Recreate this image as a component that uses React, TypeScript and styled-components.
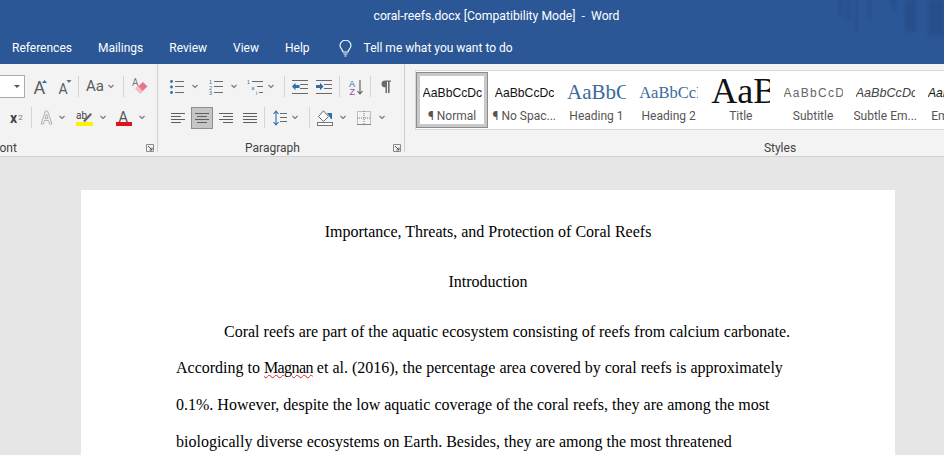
import React from 'react';
import styled, { createGlobalStyle } from 'styled-components';

const uiFont = `Roboto, 'Open Sans', Arial, sans-serif`;
const grey = '#6a6a6a';
const blue = '#2f6ea8';

const GlobalStyle = createGlobalStyle`
  html, body {
    margin: 0;
    padding: 0;
    overflow: hidden;
    background: #e6e6e6;
  }
  * {
    box-sizing: border-box;
  }
`;

const Window = styled.div`
  width: 944px;
  height: 455px;
  display: flex;
  flex-direction: column;
  overflow: hidden;
  font-family: ${uiFont};
`;

const Header = styled.header`
  position: relative;
  flex: 0 0 64px;
  background: #2b5797;
  color: #fff;
  overflow: hidden;
`;

const Decor = styled.svg`
  position: absolute;
  right: 0;
  top: 0;
  filter: blur(1.5px);
`;

const TitleBar = styled.div`
  height: 32px;
  display: flex;
  align-items: center;
  justify-content: center;
  padding-left: 49px;
  font-size: 12.2px;
  white-space: pre;
`;

const Tabs = styled.nav`
  height: 32px;
  display: flex;
  align-items: center;
  padding-left: 12px;
  gap: 26px;
  font-size: 12px;
`;

const Tell = styled.div`
  display: flex;
  align-items: center;
  gap: 12px;
  margin-left: 3px;
`;

const Ribbon = styled.section`
  flex: 0 0 93px;
  display: flex;
  background: #f3f3f3;
  border-bottom: 1px solid #d2d2d2;
  padding-bottom: 1px;
`;

const Group = styled.div<{ $w: number }>`
  flex: 0 0 ${p => p.$w}px;
  width: ${p => p.$w}px;
  display: flex;
  flex-direction: column;
  padding-top: 7px;
  border-right: 1px solid #d0d0d0;
  margin-bottom: 3px;
`;

const Row = styled.div<{ $pl?: number }>`
  height: 31px;
  display: flex;
  align-items: center;
  padding-left: ${p => p.$pl || 0}px;
`;

const Footer = styled.div`
  margin-top: auto;
  margin-bottom: -4px;
  height: 16px;
  display: flex;
  align-items: center;
  font-size: 12px;
  color: #444;
`;

const GroupLabel = styled.span<{ $pr?: number; $ml?: number; $left?: boolean }>`
  flex: 1;
  text-align: ${p => (p.$left ? 'left' : 'center')};
  padding-right: ${p => p.$pr || 0}px;
  margin-left: ${p => p.$ml || 0}px;
`;

const Launcher = styled.svg`
  flex: 0 0 8px;
  margin-right: 3px;
`;

const Combo = styled.div`
  width: 25px;
  height: 23px;
  margin-right: 8px;
  background: #fff;
  border: 1px solid #ababab;
  border-left: none;
  display: flex;
  align-items: center;
  justify-content: flex-end;
  padding-right: 4px;
`;

const Caret = styled.i`
  width: 0;
  height: 0;
  border-left: 3px solid transparent;
  border-right: 3px solid transparent;
  border-top: 3px solid #555;
`;

const Tool = styled.div<{ $w: number; $gap?: number }>`
  flex: 0 0 ${p => p.$w}px;
  width: ${p => p.$w}px;
  display: flex;
  align-items: center;
  gap: ${p => p.$gap || 0}px;
`;

const AlignTool = styled.div<{ $on?: boolean }>`
  flex: 0 0 22px;
  height: 22px;
  margin: 0 1px;
  display: flex;
  align-items: center;
  justify-content: center;
  background: ${p => (p.$on ? '#c5c5c5' : 'transparent')};
  border: 1px solid ${p => (p.$on ? '#8e8e8e' : 'transparent')};
`;

const Sep = styled.div<{ $ml?: number; $mr?: number }>`
  flex: 0 0 1px;
  height: 21px;
  background: #d4d4d4;
  margin-left: ${p => p.$ml || 0}px;
  margin-right: ${p => p.$mr || 0}px;
`;

const Glyph = styled.span<{ $size: number; $color?: string; $weight?: number }>`
  font-family: ${uiFont};
  font-size: ${p => p.$size}px;
  line-height: 1;
  color: ${p => p.$color || '#5a5a5a'};
  font-weight: ${p => p.$weight || 400};
`;

const Sup = styled.sup`
  font-size: 8px;
  line-height: 1;
  color: #777;
  margin-left: 1px;
`;

const StylesGroup = styled.div`
  flex: 0 0 740px;
  display: flex;
  flex-direction: column;
  padding: 6px 0 3px 10px;
`;

const Gallery = styled.div`
  height: 60px;
  display: flex;
  background: #fff;
  border-top: 1px solid #d6d6d6;
  border-bottom: 1px solid #d6d6d6;
  border-left: 1px solid #d6d6d6;
`;

const StyleItem = styled.div<{ $on?: boolean }>`
  flex: 0 0 72.2px;
  height: 56px;
  margin-top: 1px;
  display: flex;
  flex-direction: column;
  align-items: center;
  overflow: hidden;
  border: ${p => (p.$on ? '1px solid #8c8c8c' : '1px solid transparent')};
  box-shadow: ${p => (p.$on ? 'inset 0 0 0 3px #c8c8c8' : 'none')};
`;

const Preview = styled.div<{
  $font?: string;
  $size?: number;
  $color?: string;
  $italic?: boolean;
  $spacing?: number;
  $big?: boolean;
}>`
  width: 59px;
  height: ${p => (p.$big ? 31 : 36)}px;
  flex: 0 0 ${p => (p.$big ? 31 : 36)}px;
  margin-top: ${p => (p.$big ? 5 : 0)}px;
  display: flex;
  align-items: ${p => (p.$big ? 'flex-end' : 'center')};
  overflow: hidden;
  white-space: nowrap;
  padding-top: ${p => (p.$big ? 0 : 3)}px;
  line-height: ${p => (p.$big ? '36px' : 'normal')};
  font-family: ${p => p.$font || `'Liberation Sans', Arial, sans-serif`};
  font-size: ${p => p.$size || 12.2}px;
  color: ${p => p.$color || '#111'};
  font-style: ${p => (p.$italic ? 'italic' : 'normal')};
  letter-spacing: ${p => p.$spacing || 0}px;
`;

const ItemLabel = styled.div`
  font-size: 12px;
  line-height: 14px;
  color: #555;
  white-space: nowrap;
`;

const Canvas = styled.main`
  flex: 1;
  min-height: 0;
  padding: 33px 49px 0 81px;
  background: #e6e6e6;
`;

const Page = styled.article`
  height: 400px;
  background: #fff;
  padding: 23.5px 95px 0;
  font-family: 'Liberation Serif', 'Times New Roman', serif;
  font-size: 16px;
  line-height: 36.6px;
  color: #000;
`;

const Center = styled.p`
  margin: 0 0 13.6px;
  text-align: center;
`;

const Body = styled.p`
  margin: 0;
  text-indent: 48px;
`;

const Misspelt = styled.span`
  letter-spacing: -0.6px;
  text-decoration: underline wavy #d22;
  text-decoration-thickness: 1px;
`;

const Chevron = () => (
  <svg width="8" height="5" viewBox="0 0 8 5">
    <path d="M1.5 1 L4 3.5 L6.5 1" fill="none" stroke="#777" strokeWidth="1.1" />
  </svg>
);

const Lines = ({ xs, color = grey }: { xs: [number, number, number][]; color?: string }) => (
  <>
    {xs.map(([x1, x2, y], i) => (
      <line key={i} x1={x1} x2={x2} y1={y + 0.5} y2={y + 0.5} stroke={color} strokeWidth="1" />
    ))}
  </>
);

const Bullets = () => (
  <svg width="14" height="14" viewBox="0 0 14 14">
    <circle cx="1.5" cy="1.5" r="1.4" fill={blue} />
    <circle cx="1.5" cy="7" r="1.4" fill={blue} />
    <circle cx="1.5" cy="12.5" r="1.4" fill={blue} />
    <Lines xs={[[5, 14, 1], [5, 14, 6], [5, 14, 12]]} />
  </svg>
);

const Numbering = () => (
  <svg width="14" height="16" viewBox="0 0 14 16">
    <g fill={blue} fontSize="5.5" fontFamily="Liberation Sans">
      <text x="0" y="5">1</text>
      <text x="0" y="10.5">2</text>
      <text x="0" y="16">3</text>
    </g>
    <Lines xs={[[5, 14, 2], [5, 14, 7], [5, 14, 13]]} />
  </svg>
);

const Multilevel = () => (
  <svg width="16" height="16" viewBox="0 0 16 16">
    <g fontSize="5" fontFamily="Liberation Sans">
      <text x="0" y="5" fill={blue}>1</text>
      <text x="4.5" y="10.5" fill={blue}>a</text>
      <text x="9" y="16" fill="#555">i</text>
    </g>
    <Lines xs={[[5, 16, 2], [10, 16, 7], [12, 16, 13]]} />
  </svg>
);

const Indent = ({ flip }: { flip?: boolean }) => (
  <svg width="16" height="14" viewBox="0 0 16 14">
    <Lines xs={[[0, 16, 0], [8, 16, 4], [8, 16, 8], [0, 16, 13]]} />
    {flip ? (
      <path d="M0 5 H4 V2.8 L7.5 6.5 L4 10.2 V8 H0 Z" fill={blue} />
    ) : (
      <path d="M7.5 5 H3.5 V2.8 L0 6.5 L3.5 10.2 V8 H7.5 Z" fill={blue} />
    )}
  </svg>
);

const Sort = () => (
  <svg width="14" height="16" viewBox="0 0 14 16">
    <text x="0" y="7.5" fontSize="9" fontFamily="Liberation Sans" fill={blue}>A</text>
    <text x="0.5" y="16" fontSize="9" fontFamily="Liberation Sans" fill="#8a4fa8">Z</text>
    <path d="M11 1 V14.5 M8.5 12 L11 15 L13.5 12" fill="none" stroke="#555" strokeWidth="1.1" />
  </svg>
);

const AlignIcon = ({ kind }: { kind: 'left' | 'center' | 'right' | 'justify' }) => {
  const rows: Record<string, [number, number, number][]> = {
    left: [[0, 14, 1], [0, 10, 4], [0, 14, 7], [0, 10, 10]],
    center: [[0, 14, 1], [2, 12, 4], [0, 14, 7], [2, 12, 10]],
    right: [[0, 14, 1], [4, 14, 4], [0, 14, 7], [4, 14, 10]],
    justify: [[0, 14, 1], [0, 14, 4], [0, 14, 7], [0, 14, 10]],
  };
  return (
    <svg width="14" height="12" viewBox="0 0 14 12">
      <Lines xs={rows[kind]} color="#5f5f5f" />
    </svg>
  );
};

const LineSpacing = () => (
  <svg width="14" height="16" viewBox="0 0 14 16">
    <path d="M3 1 V15 M0.5 4 L3 1 L5.5 4 M0.5 12 L3 15 L5.5 12" fill="none" stroke={blue} strokeWidth="1.1" />
    <Lines xs={[[7, 14, 3], [7, 14, 7], [7, 14, 11]]} />
  </svg>
);

const Shading = () => (
  <svg width="16" height="16" viewBox="0 0 16 16">
    <path d="M1.5 6.5 L6.5 0.8 L11.5 6.5 L6.5 11.5 Z" fill="#fff" stroke="#666" strokeWidth="1" />
    <path d="M10 3 H15 V8.5 Q13.5 10 12.8 7 Z" fill={blue} />
    <rect x="0.5" y="12.5" width="15" height="3" fill="#fff" stroke="#777" />
  </svg>
);

const BordersIcon = () => (
  <svg width="14" height="14" viewBox="0 0 14 14">
    <rect x="0.5" y="0.5" width="13" height="13" fill="none" stroke="#888" strokeDasharray="1 1" />
    <path d="M7 0 V14 M0 7 H14" stroke="#777" strokeDasharray="1 1" />
    <path d="M0 13.5 H14" stroke="#888" />
  </svg>
);

const Pilcrow = () => (
  <svg width="10" height="13" viewBox="0 0 10 15" preserveAspectRatio="none">
    <path d="M4.5 8.5 A4 4 0 0 1 4.5 0.5 H10 V2 H8.6 V15 H7 V2 H6 V15 H4.5 Z" fill="#6b6b6b" />
  </svg>
);

const Eraser = () => (
  <svg width="16" height="17" viewBox="0 0 16 17">
    <text x="0" y="8" fontSize="10" fontFamily="Roboto" fill="#777">A</text>
    <path d="M3.5 10.5 L11 4 L15.5 8.5 L8 15.5 Z" fill="#e7788a" />
    <path d="M3.5 10.5 L6.2 8 L10.5 13 L8 15.5 Z" fill="#f3bcc4" />
  </svg>
);

const SizeFont = ({ size, up }: { size: number; up?: boolean }) => (
  <svg width="15" height="16" viewBox="0 0 15 16">
    <text x="0.5" y="15" fontSize={size} fontFamily="Roboto" fill="#5c5c5c">A</text>
    <path d={up ? 'M9 4 L11.5 1 L14 4 Z' : 'M8.5 1 L11 4 L13.5 1 Z'} fill={up ? blue : '#5f6f80'} />
  </svg>
);

const Highlight = () => (
  <svg width="17" height="16" viewBox="0 0 17 16">
    <text x="0" y="8.5" fontSize="10" fontFamily="Roboto" fill="#444">ab</text>
    <path d="M7 11 L14.5 3 L16 4.5 L9 12 Z" fill="#666" />
    <rect x="0" y="12" width="17" height="4" fill="#fbf200" />
  </svg>
);

const FontColor = () => (
  <svg width="16" height="16" viewBox="0 0 16 16">
    <text x="2.5" y="12" fontSize="14.5" fontFamily="Roboto" fill="#555">A</text>
    <rect x="0" y="12" width="16" height="4" fill="#e0101c" />
  </svg>
);

const TextEffect = () => (
  <svg width="13" height="15" viewBox="0 0 13 15">
    <path d="M1 14 L5.4 1 H7.6 L12 14 H9.6 L8.6 10.5 H4.4 L3.4 14 Z M5 8.5 H8 L6.5 4 Z" fill="#eee" stroke="#b5b5b5" />
  </svg>
);

const Bulb = () => (
  <svg width="13" height="17" viewBox="0 0 13 17">
    <path
      d="M4 12 C4 9.5 1 8.5 1 5.5 A5.5 5.2 0 0 1 12 5.5 C12 8.5 9 9.5 9 12 Z M4.5 14 H8.5 M5.5 16 H7.5"
      fill="none"
      stroke="#fff"
      strokeWidth="1.1"
    />
  </svg>
);

const LauncherIcon = () => (
  <Launcher width="8" height="8" viewBox="0 0 8 8">
    <path d="M0.5 7.5 V0.5 H7.5 V7.5 Z" fill="none" stroke="#8a8a8a" />
    <path d="M2 2 L6 6 M6 3.5 V6 H3.5" fill="none" stroke="#555" />
  </Launcher>
);

const styleItems = [
  { label: '¶ Normal', on: true },
  { label: '¶ No Spac...' },
  { label: 'Heading 1', text: 'AaBbC', font: `'Liberation Serif', serif`, size: 21, color: '#3a6a9c' },
  { label: 'Heading 2', text: 'AaBbCcI', font: `'Liberation Serif', serif`, size: 16.5, color: '#3a6a9c' },
  { label: 'Title', text: 'AaB', font: `'Liberation Serif', serif`, size: 36, big: true },
  { label: 'Subtitle', text: 'AaBbCcD', color: '#666', spacing: 1.3, size: 12 },
  { label: 'Subtle Em...', italic: true, color: '#444', size: 12.6 },
  { label: 'Emphasis', italic: true },
];

export default function App() {
  return (
    <Window>
      <GlobalStyle />
      <Header>
        <Decor width="124" height="40" viewBox="0 0 124 40">
          <g fill="#244a84" opacity="0.55">
            <rect x="18" y="0" width="5" height="16" />
            <rect x="26" y="0" width="4" height="20" />
            <rect x="35" y="0" width="3" height="32" />
            <rect x="48" y="0" width="3" height="18" />
            <path d="M69 0 L76 0 L76 12 Z" />
            <rect x="85" y="0" width="11" height="32" />
            <rect x="108" y="0" width="16" height="36" />
          </g>
        </Decor>
        <TitleBar>coral-reefs.docx [Compatibility Mode]  -  Word</TitleBar>
        <Tabs>
          <span>References</span>
          <span>Mailings</span>
          <span>Review</span>
          <span>View</span>
          <span>Help</span>
          <Tell>
            <Bulb />
            <span>Tell me what you want to do</span>
          </Tell>
        </Tabs>
      </Header>

      <Ribbon>
        <Group $w={158}>
          <Row>
            <Combo>
              <Caret />
            </Combo>
            <Tool $w={25}>
              <SizeFont size={18} up />
            </Tool>
            <Tool $w={20}>
              <SizeFont size={14} />
            </Tool>
            <Sep $mr={7} />
            <Tool $w={37} $gap={3}>
              <Glyph $size={15}>Aa</Glyph>
              <Chevron />
            </Tool>
            <Sep $mr={8} />
            <Tool $w={20}>
              <Eraser />
            </Tool>
          </Row>
          <Row $pl={10}>
            <Tool $w={21}>
              <Glyph $size={14} $weight={700} $color="#444">
                x
              </Glyph>
              <Sup>2</Sup>
            </Tool>
            <Sep $mr={8} />
            <Tool $w={36} $gap={5}>
              <TextEffect />
              <Chevron />
            </Tool>
            <Tool $w={40} $gap={6}>
              <Highlight />
              <Chevron />
            </Tool>
            <Tool $w={36} $gap={6}>
              <FontColor />
              <Chevron />
            </Tool>
          </Row>
          <Footer>
            <GroupLabel $left $ml={-7}>
              Font
            </GroupLabel>
            <LauncherIcon />
          </Footer>
        </Group>

        <Group $w={247}>
          <Row $pl={12}>
            <Tool $w={39} $gap={7}>
              <Bullets />
              <Chevron />
            </Tool>
            <Tool $w={38} $gap={7}>
              <Numbering />
              <Chevron />
            </Tool>
            <Tool $w={37} $gap={4}>
              <Multilevel />
              <Chevron />
            </Tool>
            <Sep $mr={7} />
            <Tool $w={24}>
              <Indent />
            </Tool>
            <Tool $w={23}>
              <Indent flip />
            </Tool>
            <Sep $mr={9} />
            <Tool $w={21}>
              <Sort />
            </Tool>
            <Sep $mr={10} />
            <Tool $w={12}>
              <Pilcrow />
            </Tool>
          </Row>
          <Row $pl={8}>
            <AlignTool>
              <AlignIcon kind="left" />
            </AlignTool>
            <AlignTool $on>
              <AlignIcon kind="center" />
            </AlignTool>
            <AlignTool>
              <AlignIcon kind="right" />
            </AlignTool>
            <AlignTool>
              <AlignIcon kind="justify" />
            </AlignTool>
            <Sep $ml={2} $mr={8} />
            <Tool $w={36} $gap={4}>
              <LineSpacing />
              <Chevron />
            </Tool>
            <Sep $mr={7} />
            <Tool $w={40} $gap={6}>
              <Shading />
              <Chevron />
            </Tool>
            <Tool $w={36} $gap={7}>
              <BordersIcon />
              <Chevron />
            </Tool>
          </Row>
          <Footer>
            <GroupLabel $pr={6}>Paragraph</GroupLabel>
            <LauncherIcon />
          </Footer>
        </Group>

        <StylesGroup>
          <Gallery>
            {styleItems.map(s => (
              <StyleItem key={s.label} $on={s.on}>
                <Preview
                  $font={s.font}
                  $size={s.size}
                  $color={s.color}
                  $italic={s.italic}
                  $spacing={s.spacing}
                  $big={s.big}
                >
                  {s.text || 'AaBbCcDc'}
                </Preview>
                <ItemLabel>{s.label}</ItemLabel>
              </StyleItem>
            ))}
          </Gallery>
          <Footer>
            <GroupLabel>Styles</GroupLabel>
          </Footer>
        </StylesGroup>
      </Ribbon>

      <Canvas>
        <Page>
          <Center>Importance, Threats, and Protection of Coral Reefs</Center>
          <Center>Introduction</Center>
          <Body>
            Coral reefs are part of the aquatic ecosystem consisting of reefs from calcium carbonate. According to{' '}
            <Misspelt>Magnan</Misspelt> et al. (2016), the percentage area covered by coral reefs is approximately
            0.1%. However, despite the low aquatic coverage of the coral reefs, they are among the most biologically
            diverse ecosystems on Earth. Besides, they are among the most threatened
          </Body>
        </Page>
      </Canvas>
    </Window>
  );
}
